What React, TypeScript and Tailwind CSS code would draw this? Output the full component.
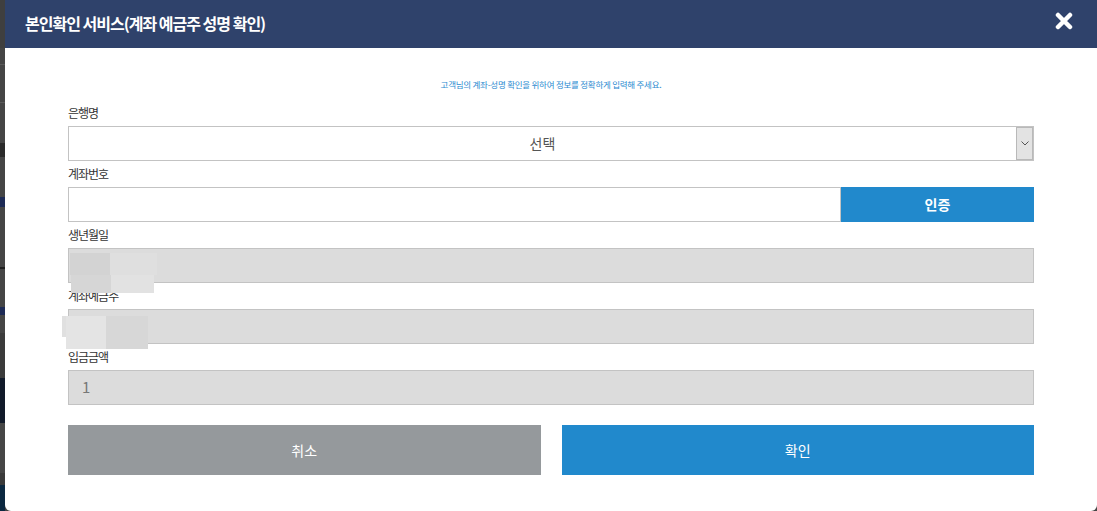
import React from "react";

const FONT = { fontFamily: '"Noto Sans CJK KR", "Noto Sans", sans-serif' };

// left edge: page behind the dimmed overlay
function Backdrop() {
  return (
    <div className="flex w-[5px] shrink-0 flex-col bg-[#454545]">
      <div className="h-[48px] bg-[#3f3f3f]" />
      <div className="h-[16px]" />
      <div className="h-px bg-[#5a5a5a]" />
      <div className="h-[37px]" />
      <div className="h-px bg-[#5a5a5a]" />
      <div className="mt-[40px] h-[14px] bg-[#2a2a2a]" />
      <div className="mt-[40px] h-[10px] bg-[#1d2a55]" />
      <div className="mt-[60px] h-[2px] bg-[#1f1f1f]" />
      <div className="mt-[38px] h-[8px] bg-[#1d2a55]" />
      <div className="mt-[18px] h-[45px] bg-[#3b3b3b]" />
      <div className="h-[45px] bg-[#111a2a]" />
      <div className="h-[50px] bg-[#464646]" />
      <div className="h-[12px] bg-[#3a3a3a]" />
      <div className="flex-1 bg-[#0b2840]" />
    </div>
  );
}

function Label({ children }: { children: React.ReactNode }) {
  return (
    <div className="mt-[3px] mb-[3px] h-[20px] text-[12px] leading-[20px] tracking-[-1px] text-[#333]">
      {children}
    </div>
  );
}

function GrayField({ value }: { value?: string }) {
  return (
    <div className="flex h-[35px] items-center border border-[#c3c3c3] bg-[#dcdcdc] pl-[13px] text-[15px] text-[#777]">
      {value}
    </div>
  );
}

export default function App() {
  return (
    <div className="flex h-[511px] w-[1097px] overflow-hidden bg-[#454545]" style={FONT}>
      <Backdrop />
      <div className="relative flex w-[1092px] shrink-0 flex-col overflow-hidden rounded-b-[6px] bg-white">
        {/* header */}
        <div className="flex h-[48px] shrink-0 items-center justify-between bg-[#2f426b] pl-[20px] pr-[24px]">
          <h1 className="-mt-[3px] text-[16px] font-bold tracking-[-1px] text-white">
            본인확인 서비스(계좌 예금주 성명 확인)
          </h1>
          <svg width="18" height="18" viewBox="0 0 18 18" className="-mt-[6px]">
            <path d="M3 3 L15 15 M15 3 L3 15" stroke="white" strokeWidth="4.5" strokeLinecap="round" />
          </svg>
        </div>

        <div className="flex flex-col px-[63px] pt-[28px]">
          <p className="h-[16px] text-center text-[8.5px] leading-[16px] tracking-[-0.25px] text-[#2a8ad0]">
            고객님의 계좌-성명 확인을 위하여 정보를 정확하게 입력해 주세요.
          </p>

          <div className="mt-[8px]">
            <Label>은행명</Label>
            <div className="flex h-[35px] border border-[#c3c3c3] bg-white">
              <div className="flex flex-1 items-center justify-center text-[14px] text-[#555]">선택</div>
              <div className="flex w-[17px] items-center justify-center border border-[#b9b9b9] bg-[#e3e3e3]">
                <svg width="8" height="5" viewBox="0 0 8 5">
                  <path d="M0.5 0.5 L4 4 L7.5 0.5" fill="none" stroke="#555" strokeWidth="1" />
                </svg>
              </div>
            </div>

            <Label>계좌번호</Label>
            <div className="flex h-[35px]">
              <div className="flex-1 border border-[#c3c3c3] bg-white" />
              <button className="w-[193px] bg-[#2189cc] text-[14px] font-bold text-white">인증</button>
            </div>

            <div className="relative">
              <Label>생년월일</Label>
              <GrayField />
              <Label>계좌예금주</Label>
              <GrayField />
              {/* mosaic over personal info */}
              <div className="absolute left-[2px] top-[28px] h-[22px] w-[40px] bg-[#d3d3d3]" />
              <div className="absolute left-[42px] top-[28px] h-[22px] w-[47px] bg-[#dfdfdf]" />
              <div className="absolute left-[3px] top-[50px] h-[18px] w-[40px] bg-[#d6d6d6]" />
              <div className="absolute left-[43px] top-[50px] h-[18px] w-[43px] bg-[#e2e2e2]" />
              <div className="absolute left-[-6px] top-[91px] h-[21px] w-[6px] bg-[#e0e0e0]" />
              <div className="absolute left-[-2px] top-[91px] h-[33px] w-[40px] bg-[#e4e4e4]" />
              <div className="absolute left-[38px] top-[91px] h-[33px] w-[42px] bg-[#d7d7d7]" />
            </div>

            <Label>입금금액</Label>
            <GrayField value="1" />
          </div>

          <div className="mt-[20px] grid grid-cols-2 gap-[21px]">
            <button className="h-[50px] bg-[#95999c] text-[14px] text-white">취소</button>
            <button className="h-[50px] bg-[#2189cc] text-[14px] text-white">확인</button>
          </div>
        </div>
      </div>
    </div>
  );
}
